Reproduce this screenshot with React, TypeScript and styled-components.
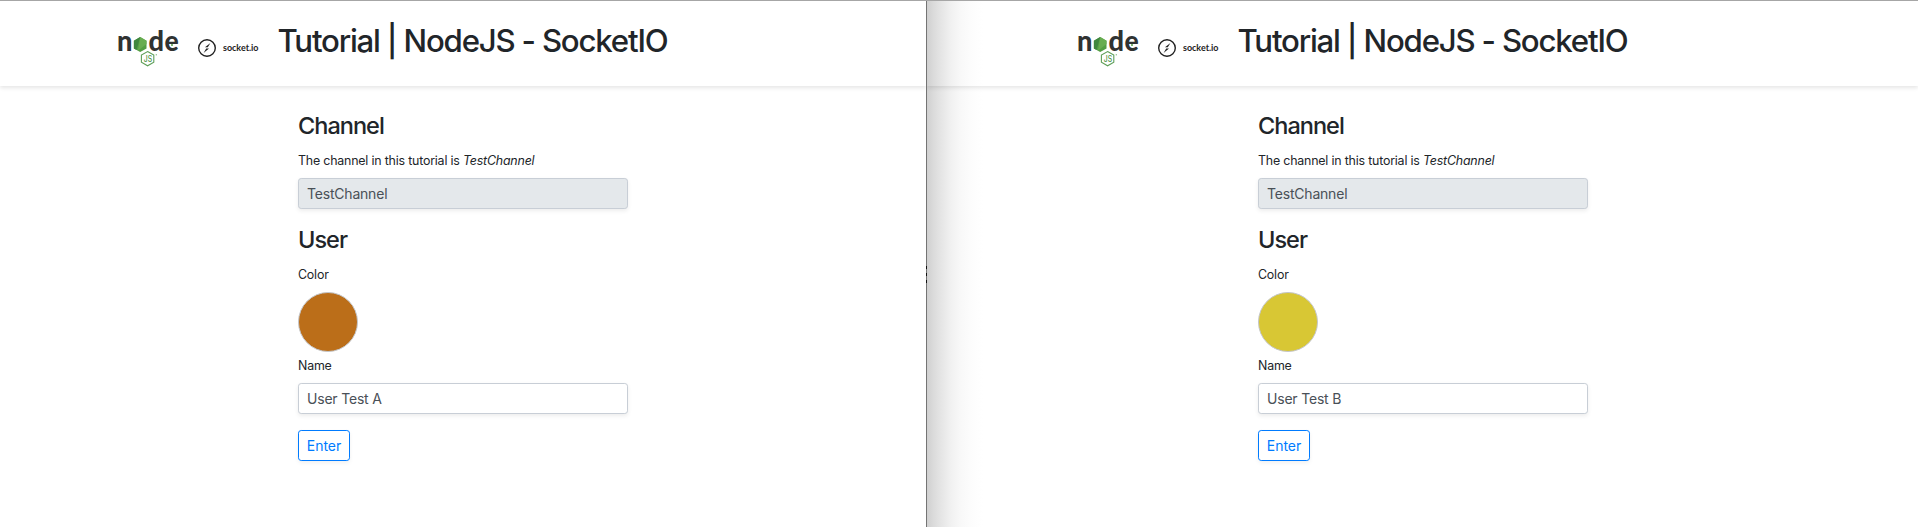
import React from 'react';
import styled, { createGlobalStyle } from 'styled-components';

const GlobalStyle = createGlobalStyle`
  *, *::before, *::after { box-sizing: border-box; }
  html, body { margin: 0; background: #fff; }
  body {
    overflow: hidden;
    font-family: Inter, 'Liberation Sans', sans-serif;
    font-size: 16px;
    color: #212529;
    -webkit-font-smoothing: antialiased;
  }
`;

const SplitView = styled.div`
  display: grid;
  grid-template-columns: 926px 1px 1fr;
  height: 527px;
  border-top: 1px solid #a6a6a6;
`;

const Pane = styled.section<{ $shaded?: boolean }>`
  min-width: 0;
  padding-left: ${({ $shaded }) => ($shaded ? 33 : 0)}px;
  background: ${({ $shaded }) =>
    $shaded
      ? 'linear-gradient(90deg, #d0d0d0 0, #dadada 6px, #e5e5e5 14px, #f0f0f0 23px, #f8f8f8 33px, #fcfcfc 43px, #fff 56px)'
      : '#fff'};
`;

const Divider = styled.div`
  display: flex;
  flex-direction: column;
  align-items: center;
  gap: 4px;
  padding-top: 265px;
  background: #747474;
`;

const Grip = styled.i`
  width: 1px;
  height: 3px;
  background: #111;
`;

const Header = styled.header<{ $bleed?: boolean }>`
  display: flex;
  align-items: flex-start;
  height: 85px;
  margin-left: ${({ $bleed }) => ($bleed ? -33 : 0)}px;
  padding: 19px 0 0 ${({ $bleed }) => ($bleed ? 151 : 118)}px;
  box-shadow: 0 2px 4px rgba(0, 0, 0, 0.1);
  clip-path: inset(0 0 -6px 0);
`;

const NodeMark = styled.svg`
  width: 62px;
  height: 40px;
  margin-top: 8px;
  margin-right: 17px;
  overflow: visible;
`;

const SocketMark = styled.svg`
  width: 64px;
  height: 20px;
  margin-top: 18px;
  margin-right: 16.5px;
  overflow: visible;
`;

const Title = styled.h2`
  margin: 1px 0 0;
  font-size: 31.2px;
  font-weight: 500;
  line-height: 40px;
  letter-spacing: -1.2px;
  white-space: nowrap;
`;

const Form = styled.form`
  display: flex;
  flex-direction: column;
  align-items: flex-start;
  width: 330px;
  margin: 25px 0 0 298px;
`;

const Heading = styled.h4`
  margin: 0 0 11px;
  font-size: 23.5px;
  font-weight: 500;
  line-height: 29px;
  letter-spacing: -0.98px;
`;

const Label = styled.label`
  margin-bottom: 8px;
  font-size: 12.4px;
  line-height: 19px;
  letter-spacing: -0.19px;
  white-space: nowrap;
`;

const TextField = styled.input`
  width: 100%;
  height: 31px;
  margin: 0 0 16px;
  padding: 4px 8px;
  border: 1px solid #c8ced6;
  border-radius: 3.2px;
  outline: none;
  background: #fff;
  box-shadow: 0 2px 4px rgba(0, 0, 0, 0.075);
  color: #495057;
  font: 400 14px/21px Inter, 'Liberation Sans', sans-serif;
  letter-spacing: -0.2px;

  &:disabled {
    background: #e4e8eb;
    color: #495057;
    opacity: 1;
  }
`;

const Swatch = styled.div<{ $color: string }>`
  width: 60px;
  height: 60px;
  margin-bottom: 4px;
  border: 1px solid #c4c6ca;
  border-radius: 50%;
  background: ${({ $color }) => $color};
`;

const EnterButton = styled.button`
  width: 52px;
  height: 31px;
  padding: 0;
  border: 1px solid #007bff;
  border-radius: 3.2px;
  background: transparent;
  box-shadow: 0 2px 4px rgba(0, 0, 0, 0.06);
  color: #007bff;
  font: 400 14px/21px Inter, 'Liberation Sans', sans-serif;
`;

function NodeLogo() {
  return (
    <NodeMark viewBox="0 0 62 40" aria-label="node JS">
      <g fill="#303332" fontFamily="Lato, sans-serif" fontWeight="900" fontSize="27.5">
        <text x="-1" y="23.3" textLength="15.4" lengthAdjust="spacingAndGlyphs">n</text>
        <text x="30.6" y="23.3" textLength="15.5" lengthAdjust="spacingAndGlyphs">d</text>
        <text x="46.6" y="23.3" textLength="14.2" lengthAdjust="spacingAndGlyphs">e</text>
      </g>
      <path d="M22.2 9 28.5 12.7V20.4L22.2 24 15.9 20.4V12.7Z" fill="#539e43" />
      <path d="M22.2 9 15.9 12.7V20.4L18.5 22Z" fill="#3f873f" />
      <path d="M22.2 9 28.5 12.7V16L20 22.8Z" fill="#67ad50" />
      <path d="M29.6 23.6 35.8 27.1V34.2L29.6 37.8 23.4 34.2V27.1Z" fill="#fff" stroke="#5f9f58" strokeWidth="1.1" />
      <text x="25.8" y="34" fill="#4f9447" fontFamily="Inter, sans-serif" fontWeight="500" fontSize="8.8" textLength="8.2" lengthAdjust="spacingAndGlyphs">JS</text>
      <circle cx="38.3" cy="26.8" r=".7" fill="#8bbb86" />
      <circle cx="54" cy="17" r="1" fill="#539e43" />
    </NodeMark>
  );
}

function SocketLogo() {
  return (
    <SocketMark viewBox="0 0 64 20" aria-label="socket.io">
      <circle cx="10" cy="10" r="8.3" fill="none" stroke="#222" strokeWidth="1.4" />
      <path d="M8 9.3 13.4 5 10.8 9.3ZM9.2 10.4H12L6.6 15Z" fill="#222" />
      <text x="26" y="13.2" fill="#222" fontFamily="Lato, sans-serif" fontWeight="700" fontSize="9" textLength="35.5" lengthAdjust="spacingAndGlyphs">socket.io</text>
    </SocketMark>
  );
}

interface ClientProps {
  name: string;
  color: string;
  shaded?: boolean;
}

function Client({ name, color, shaded }: ClientProps) {
  return (
    <Pane $shaded={shaded}>
      <Header $bleed={shaded}>
        <NodeLogo />
        <SocketLogo />
        <Title>Tutorial | NodeJS - SocketIO</Title>
      </Header>
      <Form>
        <Heading>Channel</Heading>
        <Label>The channel in this tutorial is <em>TestChannel</em></Label>
        <TextField defaultValue="TestChannel" disabled />
        <Heading>User</Heading>
        <Label>Color</Label>
        <Swatch $color={color} />
        <Label>Name</Label>
        <TextField defaultValue={name} />
        <EnterButton type="button">Enter</EnterButton>
      </Form>
    </Pane>
  );
}

export default function App() {
  return (
    <>
      <GlobalStyle />
      <SplitView>
        <Client name="User Test A" color="#bb6e19" />
        <Divider><Grip /><Grip /><Grip /></Divider>
        <Client name="User Test B" color="#d8c734" shaded />
      </SplitView>
    </>
  );
}
